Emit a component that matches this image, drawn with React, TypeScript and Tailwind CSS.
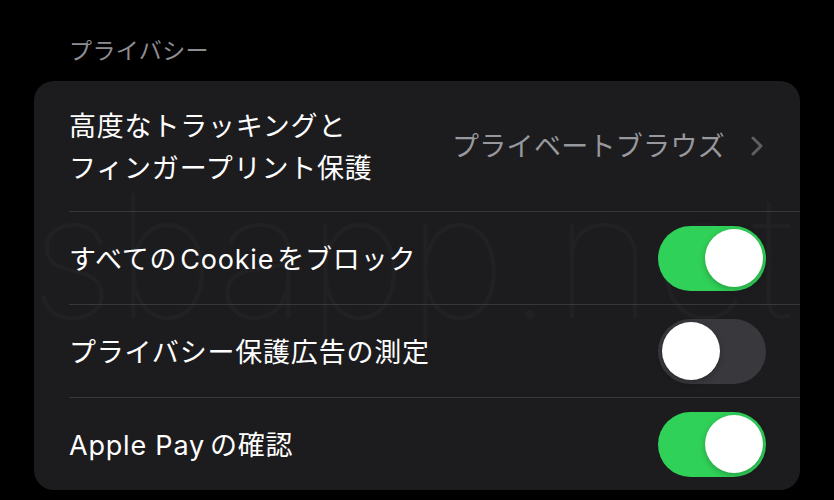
import React from "react";

const font = { fontFamily: 'Inter, "Noto Sans CJK JP", sans-serif' };

function Toggle({ on }: { on: boolean }) {
  return (
    <div
      className={`flex h-[65px] w-[108px] shrink-0 items-center rounded-full p-[3.5px] ${
        on ? "justify-end bg-[#30d158]" : "justify-start bg-[#39393d]"
      }`}
    >
      <span className="h-[58px] w-[58px] rounded-full bg-white shadow-[0_2px_6px_rgba(0,0,0,0.25)]" />
    </div>
  );
}

function Chevron() {
  return (
    <svg width="12" height="20" viewBox="0 0 12 20" fill="none" className="ml-[26px] shrink-0">
      <path d="M2 2 L10 10 L2 18" stroke="#5e5e62" strokeWidth="3" strokeLinecap="round" strokeLinejoin="round" />
    </svg>
  );
}

export default function App() {
  return (
    <div className="min-h-screen bg-black px-[34px] text-white" style={font}>
      <div className="pl-[35px] pt-[36px] text-[23px] leading-[30px] tracking-[0.4px] text-[#8d8d92]">プライバシー</div>

      <div className="relative mt-[15px] overflow-hidden rounded-[20px] bg-[#1c1c1e]">
        {/* faint watermark behind the rows */}
        <div
          className="pointer-events-none absolute left-[-4px] top-[88px] select-none whitespace-nowrap text-[172px] font-thin leading-none text-white/[0.022]"
          style={{ fontFamily: "Inter, sans-serif" }}
        >
          sbapp.net
        </div>

        <div className="relative pl-[35px] text-[27px] tracking-[0.8px]">
          <div className="flex h-[131px] items-center border-b border-[#38383a] pr-[37px]">
            <div className="flex-1 pt-[4px] leading-[42px]">
              <div>高度なトラッキングと</div>
              <div>フィンガープリント保護</div>
            </div>
            <span className="pt-[2px] tracking-[0.3px] text-[#98989d]">プライベートブラウズ</span>
            <Chevron />
          </div>

          <div className="flex h-[93px] items-center border-b border-[#38383a] pr-[34px]">
            <span className="flex-1 pt-[5px]">
              すべての<span className="px-[3px]">Cookie</span>をブロック
            </span>
            <Toggle on />
          </div>

          <div className="flex h-[93px] items-center border-b border-[#38383a] pr-[34px]">
            <span className="flex-1 pt-[5px]">プライバシー保護広告の測定</span>
            <Toggle on={false} />
          </div>

          <div className="flex h-[92px] items-center pr-[34px]">
            <span className="flex-1 pt-[5px]">
              Apple Pay<span className="pl-[5px]">の確認</span>
            </span>
            <Toggle on />
          </div>
        </div>
      </div>
    </div>
  );
}
